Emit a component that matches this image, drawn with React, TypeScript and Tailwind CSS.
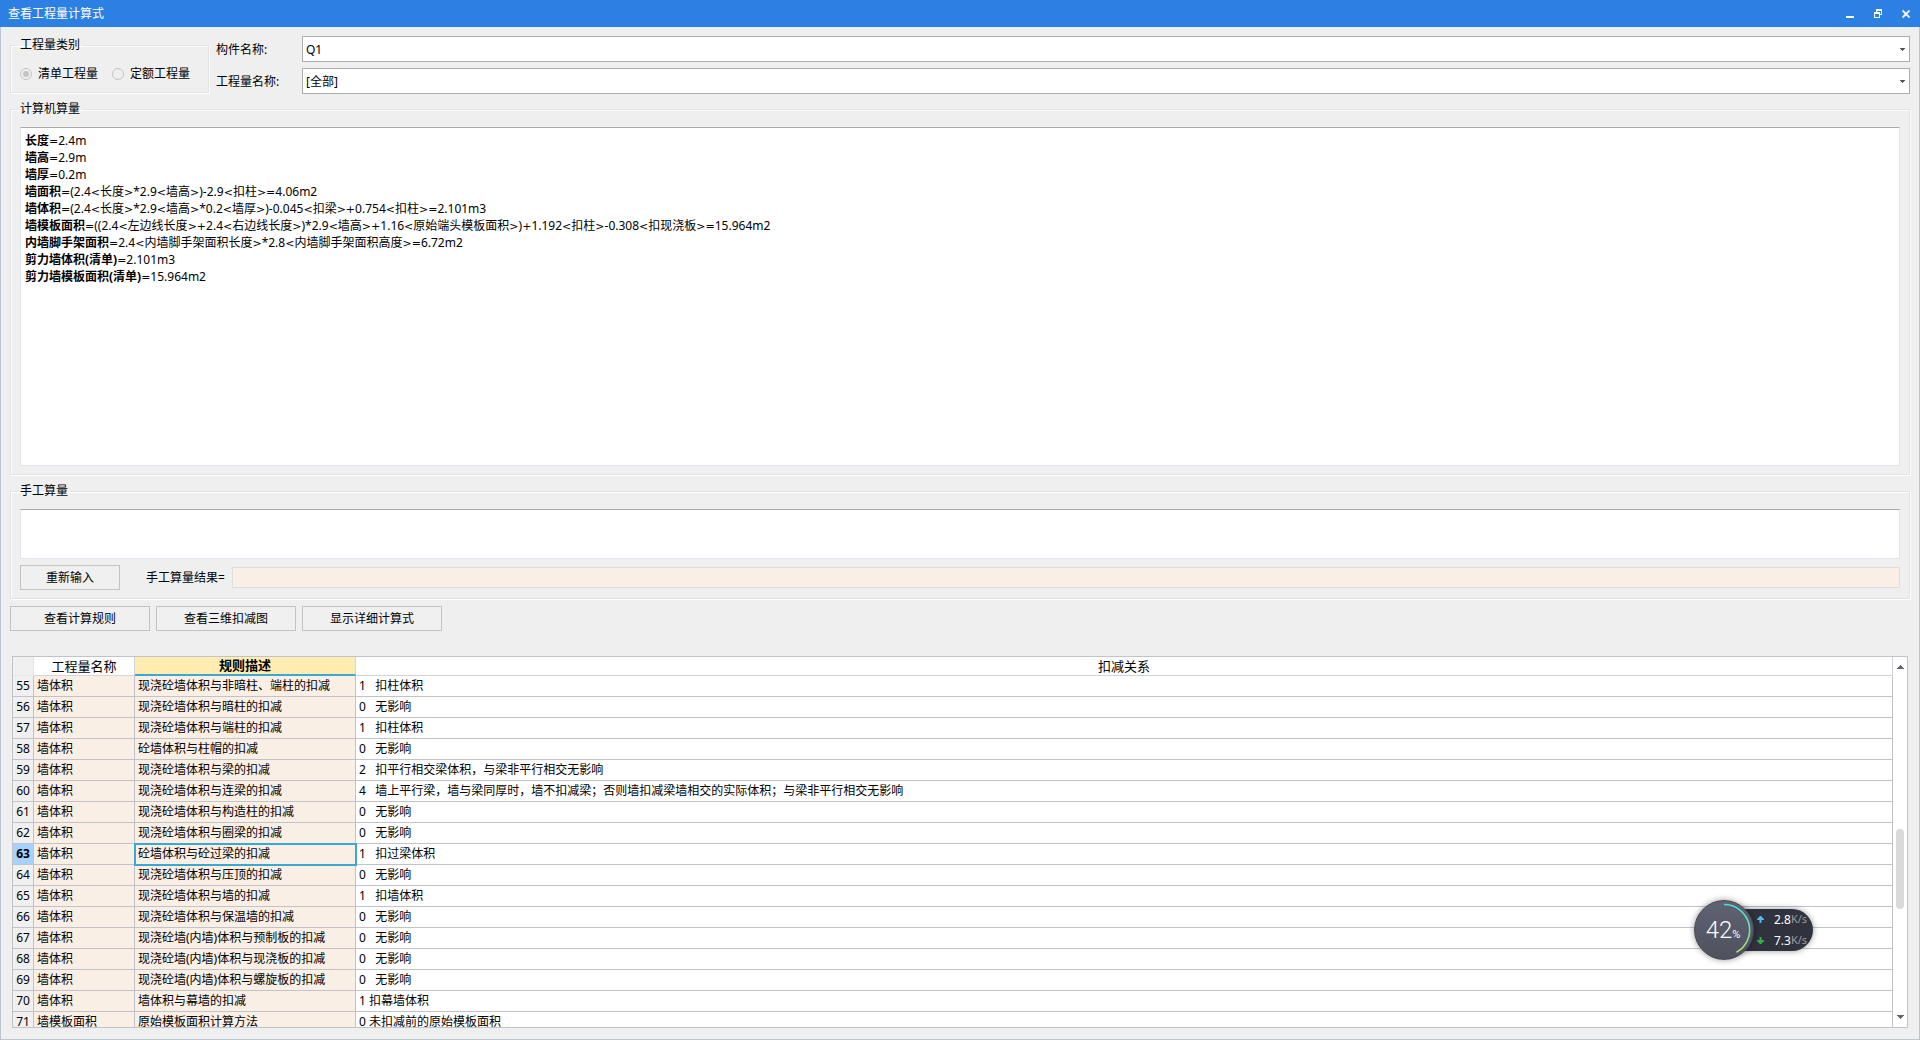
import type { ReactNode } from 'react'

type Formula = { name: string; value: string }
type Rule = { id: number; name: string; desc: string; relation: string }

const FORMULAS: Formula[] = [
  { name: '长度', value: '=2.4m' },
  { name: '墙高', value: '=2.9m' },
  { name: '墙厚', value: '=0.2m' },
  { name: '墙面积', value: '=(2.4<长度>*2.9<墙高>)-2.9<扣柱>=4.06m2' },
  { name: '墙体积', value: '=(2.4<长度>*2.9<墙高>*0.2<墙厚>)-0.045<扣梁>+0.754<扣柱>=2.101m3' },
  { name: '墙模板面积', value: '=((2.4<左边线长度>+2.4<右边线长度>)*2.9<墙高>+1.16<原始端头模板面积>)+1.192<扣柱>-0.308<扣现浇板>=15.964m2' },
  { name: '内墙脚手架面积', value: '=2.4<内墙脚手架面积长度>*2.8<内墙脚手架面积高度>=6.72m2' },
  { name: '剪力墙体积(清单)', value: '=2.101m3' },
  { name: '剪力墙模板面积(清单)', value: '=15.964m2' },
]

const RULES: Rule[] = [
  { id: 55, name: '墙体积', desc: '现浇砼墙体积与非暗柱、端柱的扣减', relation: '1   扣柱体积' },
  { id: 56, name: '墙体积', desc: '现浇砼墙体积与暗柱的扣减', relation: '0   无影响' },
  { id: 57, name: '墙体积', desc: '现浇砼墙体积与端柱的扣减', relation: '1   扣柱体积' },
  { id: 58, name: '墙体积', desc: '砼墙体积与柱帽的扣减', relation: '0   无影响' },
  { id: 59, name: '墙体积', desc: '现浇砼墙体积与梁的扣减', relation: '2   扣平行相交梁体积，与梁非平行相交无影响' },
  { id: 60, name: '墙体积', desc: '现浇砼墙体积与连梁的扣减', relation: '4   墙上平行梁，墙与梁同厚时，墙不扣减梁；否则墙扣减梁墙相交的实际体积；与梁非平行相交无影响' },
  { id: 61, name: '墙体积', desc: '现浇砼墙体积与构造柱的扣减', relation: '0   无影响' },
  { id: 62, name: '墙体积', desc: '现浇砼墙体积与圈梁的扣减', relation: '0   无影响' },
  { id: 63, name: '墙体积', desc: '砼墙体积与砼过梁的扣减', relation: '1   扣过梁体积' },
  { id: 64, name: '墙体积', desc: '现浇砼墙体积与压顶的扣减', relation: '0   无影响' },
  { id: 65, name: '墙体积', desc: '现浇砼墙体积与墙的扣减', relation: '1   扣墙体积' },
  { id: 66, name: '墙体积', desc: '现浇砼墙体积与保温墙的扣减', relation: '0   无影响' },
  { id: 67, name: '墙体积', desc: '现浇砼墙(内墙)体积与预制板的扣减', relation: '0   无影响' },
  { id: 68, name: '墙体积', desc: '现浇砼墙(内墙)体积与现浇板的扣减', relation: '0   无影响' },
  { id: 69, name: '墙体积', desc: '现浇砼墙(内墙)体积与螺旋板的扣减', relation: '0   无影响' },
  { id: 70, name: '墙体积', desc: '墙体积与幕墙的扣减', relation: '1 扣幕墙体积' },
  { id: 71, name: '墙模板面积', desc: '原始模板面积计算方法', relation: '0 未扣减前的原始模板面积' },
]

const SELECTED_ID = 63

function TitleBar() {
  return (
    <header className="flex h-[27px] shrink-0 items-center bg-[#2d80e3] pl-2 pr-1.5 text-white">
      <h1 className="flex-1 text-xs">查看工程量计算式</h1>
      <div className="flex gap-3">
        <button type="button" aria-label="最小化" className="flex size-4 items-center justify-center">
          <svg width="8" height="10" viewBox="0 0 8 10" fill="currentColor"><path d="M0 7h8v2H0z" /></svg>
        </button>
        <button type="button" aria-label="还原" className="flex size-4 items-center justify-center">
          <svg width="8" height="9" viewBox="0 0 8 9" fill="currentColor" fillRule="evenodd">
            <path d="M2 0h6v6H6V5h1V2H3v1H2zM0 3h6v6H0zM1 5v3h4V5z" />
          </svg>
        </button>
        <button type="button" aria-label="关闭" className="flex size-4 items-center justify-center">
          <svg width="8" height="8" viewBox="0 0 8 8" stroke="currentColor" strokeWidth="1.8"><path d="M.5 .5l7 7M7.5 .5l-7 7" /></svg>
        </button>
      </div>
    </header>
  )
}

function Group({ title, className = '', children }: { title: string; className?: string; children: ReactNode }) {
  return (
    <fieldset className={`min-w-0 border border-[#e2e2e2] shadow-[1px_1px_0_#fff,inset_1px_1px_0_#fff] ${className}`}>
      <legend className="ml-[7px] px-0.5 leading-[18px]">{title}</legend>
      {children}
    </fieldset>
  )
}

function Combo({ id, label, value }: { id: string; label: string; value: string }) {
  return (
    <div className="flex h-[26px] items-center">
      <label htmlFor={id} className="w-[86px] shrink-0 pt-0.5">{label}</label>
      <div className="relative h-full flex-1">
        <select id={id} className="block h-full w-full appearance-none border border-[#adadad] bg-white px-[3px] pt-0.5">
          <option>{value}</option>
        </select>
        <svg className="pointer-events-none absolute right-[5px] top-3" width="5" height="3" viewBox="0 0 5 3" fill="#555">
          <path d="M0 0h5v1H4v1H3v1H2V2H1V1H0z" />
        </svg>
      </div>
    </div>
  )
}

function PushButton({ className, children }: { className: string; children: ReactNode }) {
  return (
    <button type="button" className={`h-[25px] border border-[#c3c3c3] bg-[#f0f0f0] text-center ${className}`}>
      {children}
    </button>
  )
}

// operators are set in a wider face than the digits
function Expression({ text }: { text: string }) {
  return text.split(/([<>=+]+)/).map((part, i) =>
    i % 2 ? <span key={i} className="font-['DejaVu_Sans'] text-[11px] leading-none">{part}</span> : part
  )
}

function RuleTable() {
  return (
    <table className="w-full table-fixed border-separate border-spacing-0">
      <colgroup>
        <col className="w-[21px]" />
        <col className="w-[101px]" />
        <col className="w-[221px]" />
        <col />
      </colgroup>
      <thead>
        <tr className="h-[19px] text-[13px] leading-[17px]">
          <th aria-label="序号" className="border-b border-r border-[#e4e4e4] bg-[#f0f0f0] p-0" />
          <th className="border-b border-r border-[#d4d4d8] bg-white p-0 font-normal">工程量名称</th>
          <th className="border-b-2 border-r border-b-[#3aa8d0] border-r-[#d4d4d8] bg-[#ffecb0] p-0 font-bold">规则描述</th>
          <th className="border-b border-r border-[#d4d4d8] bg-white p-0 font-normal">扣减关系</th>
        </tr>
      </thead>
      <tbody>
        {RULES.map((rule) => {
          const selected = rule.id === SELECTED_ID
          return (
            <tr key={rule.id} className="h-[21px] whitespace-pre leading-5">
              <th scope="row" className={`border-b border-r border-[#c2c3ca] p-0 ${selected ? 'bg-[#a6d2ff] font-bold' : 'bg-[#f0f0f0] font-normal'}`}>{rule.id}</th>
              <td className="border-b border-r border-[#c2c3ca] bg-[#faefe5] py-0 pl-[3px] pr-0">{rule.name}</td>
              <td className={`border-b border-r border-[#c2c3ca] bg-[#faefe5] py-0 pl-[3px] pr-0 ${selected ? 'outline-2 -outline-offset-1 outline-[#3aa8d0]' : ''}`}>{rule.desc}</td>
              <td className="border-b border-r border-[#c2c3ca] bg-white py-0 pl-[3px] pr-0">{rule.relation}</td>
            </tr>
          )
        })}
      </tbody>
    </table>
  )
}

function ScrollBar() {
  return (
    <div className="flex w-3.5 shrink-0 flex-col items-center bg-white py-2">
      <svg width="7" height="4" viewBox="0 0 7 4" fill="#666670"><path d="M3 0h1v1h1v1h1v1h1v1H0V3h1V2h1V1h1z" /></svg>
      <div className="min-h-0 flex-[160]" />
      <div className="h-20 w-2 shrink-0 rounded-full bg-[#dadada]" />
      <div className="min-h-0 flex-[106]" />
      <svg width="7" height="4" viewBox="0 0 7 4" fill="#666670"><path d="M0 0h7v1H6v1H5v1H4v1H3V3H2V2H1V1H0z" /></svg>
    </div>
  )
}

function SpeedRow({ up, value }: { up: boolean; value: string }) {
  return (
    <div className="flex h-[21px] items-center">
      <svg width="7" height="7" viewBox="0 0 7 7" fill={up ? '#55b8f5' : '#35b045'} className={up ? 'mr-2.5' : 'mr-2.5 rotate-180'}>
        <path d="M3 0h1l3 3v1H4.500v3h-2V4H0V3z" />
      </svg>
      <span className="text-xs text-white">{value}</span>
      <span className="text-[11px] text-[#9a9ca4]">K/s</span>
    </div>
  )
}

// floating system monitor, sits over the window
function SpeedBall() {
  return (
    <div className="absolute bottom-[80px] right-[107px] flex items-center">
      <div className="relative z-10 size-[60px] rounded-full border border-[#444650] bg-linear-to-b from-[#5f6272] to-[#4f515e] shadow-[0_0_6px_rgba(0,0,0,0.4)]">
        <svg className="absolute inset-0" width="58" height="58" viewBox="0 0 58 58" fill="none">
          <defs>
            <linearGradient id="arc" x1="0" y1="0" x2="0" y2="1">
              <stop offset="0" stopColor="#45dfd8" />
              <stop offset="0.5" stopColor="#6fe0b0" />
              <stop offset="1" stopColor="#b8e070" />
            </linearGradient>
          </defs>
          <path d="M29 3.500A25.500 25.500 0 0 1 41.500 51.300" stroke="url(#arc)" strokeWidth="1.6" />
        </svg>
        <div className="flex h-full items-baseline justify-center pr-0.5 font-['Roboto'] leading-[58px] text-white">
          <span className="text-2xl font-light leading-[58px]">42</span>
          <span className="text-[11px]">%</span>
        </div>
      </div>
      <div className="-ml-8 h-[42px] w-[91px] rounded-r-full bg-[#30333e] pl-[35px] shadow-[0_0_6px_rgba(0,0,0,0.4)]">
        <SpeedRow up value="2.8" />
        <SpeedRow up={false} value="7.3" />
      </div>
    </div>
  )
}

export default function App() {
  return (
    <div className="relative flex h-screen flex-col bg-[#efefef] font-['Noto_Sans','Noto_Sans_CJK_SC',sans-serif] text-xs text-black">
      <TitleBar />
      <main className="flex min-h-0 flex-1 flex-col border-x border-b border-[#bcc4d2] px-[9px] pb-[11px] pt-[9px]">
        <div className="flex gap-[7px]">
          <Group title="工程量类别" className="mb-px w-[199px] shrink-0">
            <div className="flex gap-3.5 pl-[9px] pt-3 leading-4">
              <label className="flex items-center gap-1.5">
                <input type="radio" name="kind" defaultChecked disabled className="flex size-3 appearance-none items-center justify-center rounded-full border border-[#c4c4c4] before:size-1.5 before:rounded-full before:bg-[#c4c4c4]" />
                清单工程量
              </label>
              <label className="flex items-center gap-1.5">
                <input type="radio" name="kind" disabled className="size-3 appearance-none rounded-full border border-[#c4c4c4]" />
                定额工程量
              </label>
            </div>
          </Group>
          <div className="flex flex-1 flex-col gap-1.5">
            <Combo id="component" label="构件名称:" value="Q1" />
            <Combo id="quantity" label="工程量名称:" value="[全部]" />
          </div>
        </div>

        <Group title="计算机算量" className="mt-1.5">
          <div className="px-[9px] pb-2 pt-[9px]">
            <div className="h-[339px] overflow-auto border border-[#e0e2ec] border-t-[#a8a8ac] bg-white px-1 pt-1 leading-[17px]">
              {FORMULAS.map((f) => (
                <p key={f.name}><b>{f.name}</b><Expression text={f.value} /></p>
              ))}
            </div>
          </div>
        </Group>

        <Group title="手工算量" className="mt-[7px]">
          <div className="px-[9px] pb-2 pt-[9px]">
            <textarea aria-label="手工算量" className="block h-[50px] w-full resize-none border border-[#e0e2ec] border-t-[#a8a8ac] bg-white px-1" />
            <div className="mt-1.5 flex items-center">
              <PushButton className="w-[100px]">重新输入</PushButton>
              <label htmlFor="result" className="ml-[26px] w-[86px]">手工算量结果=</label>
              <input id="result" readOnly className="h-[21px] flex-1 border border-[#dedede] bg-[#faefe5] px-1" />
            </div>
          </div>
        </Group>

        <div className="mt-[7px] flex gap-1.5">
          <PushButton className="w-[140px]">查看计算规则</PushButton>
          <PushButton className="w-[140px]">查看三维扣减图</PushButton>
          <PushButton className="w-[140px]">显示详细计算式</PushButton>
        </div>

        <section className="ml-0.5 mr-0.5 mt-[25px] flex min-h-0 flex-1 border border-[#c2c3ca]">
          <div className="min-w-0 flex-1 overflow-hidden">
            <RuleTable />
          </div>
          <ScrollBar />
        </section>
      </main>
      <SpeedBall />
    </div>
  )
}
